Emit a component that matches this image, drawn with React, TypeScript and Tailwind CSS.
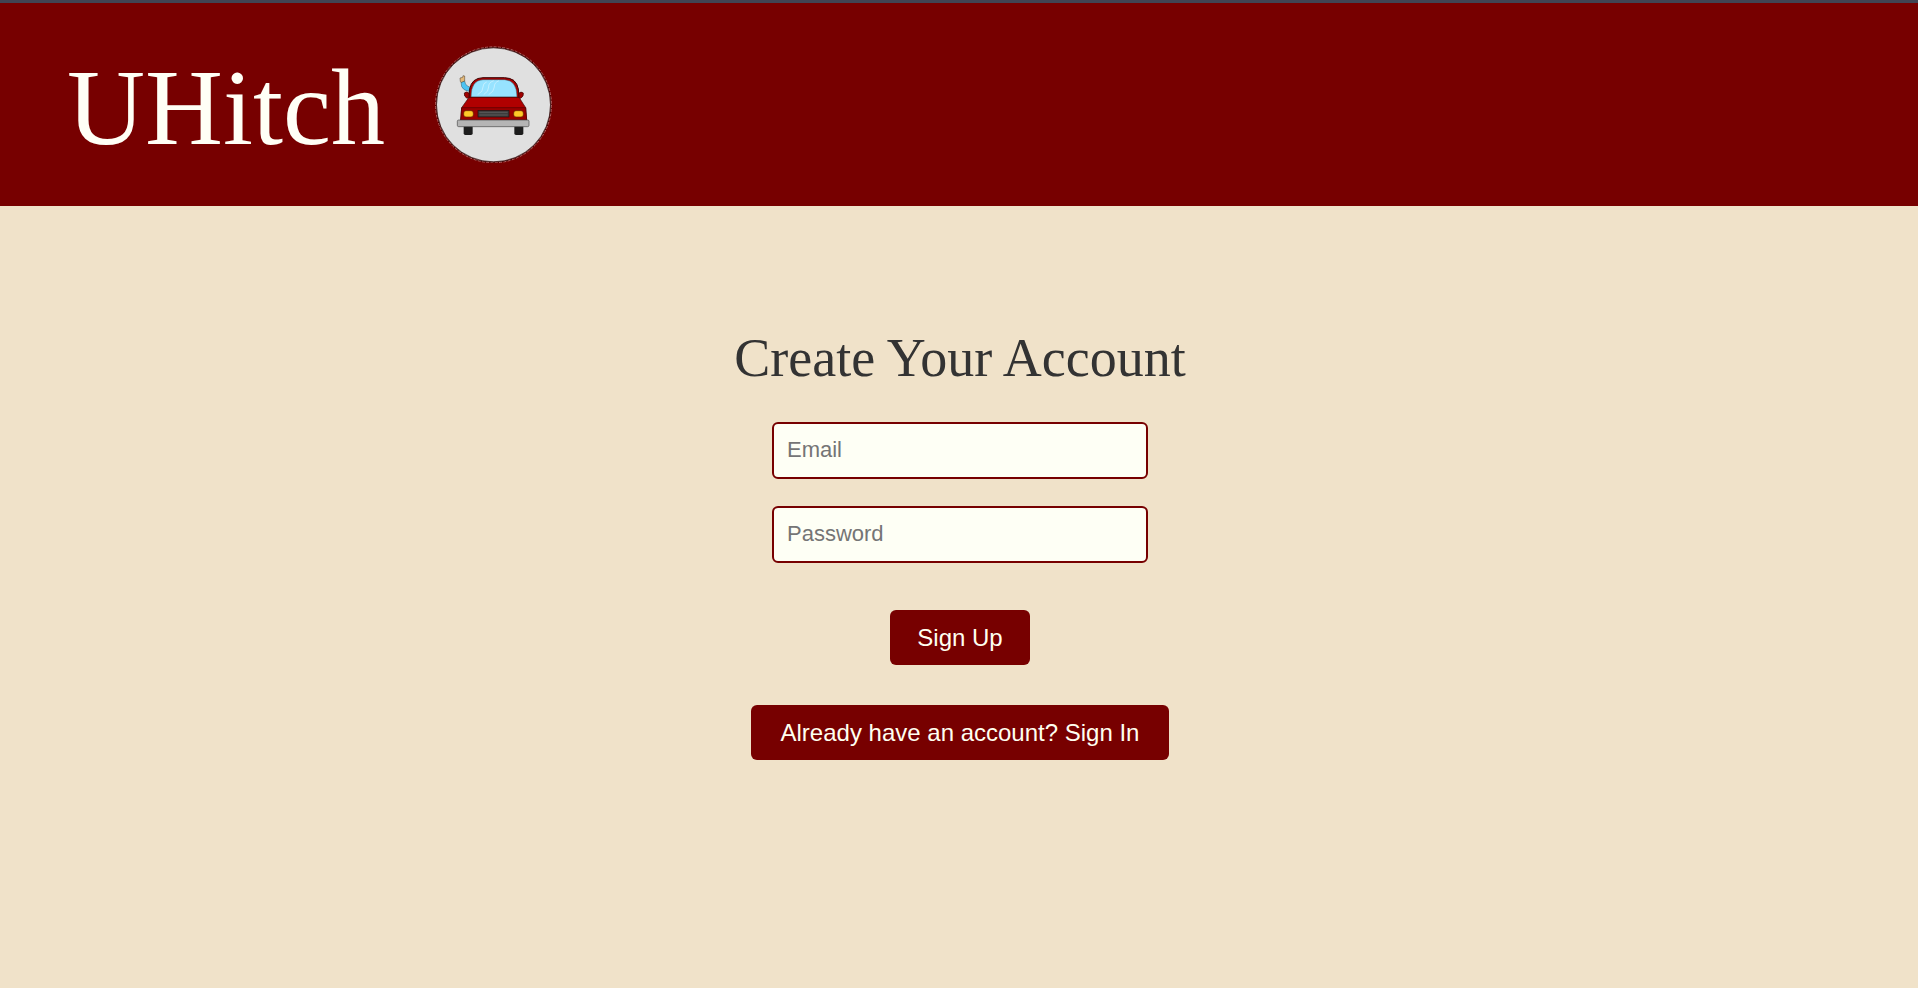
import React, { useState } from 'react';

const SERIF = "font-['Liberation_Serif','Times_New_Roman',serif]";
const SANS = "font-['Liberation_Sans',Arial,sans-serif]";

const inputClass = `w-full h-[57px] px-[13px] pb-0.5 rounded-md border-2 border-[#770000] bg-[#fefff5] text-[22px] text-[#333] placeholder:text-[#757575] outline-none focus:border-[#a00000] ${SANS}`;
const buttonClass = `h-[55px] rounded-md bg-[#770000] text-[24px] text-[#fffff0] cursor-pointer hover:bg-[#900000] ${SANS}`;

function CarLogo() {
  return (
    <svg viewBox="30 33 351 351" className="size-[117px] shrink-0" role="img" aria-label="UHitch logo">
      <circle cx="205.5" cy="209.5" r="174" fill="#3c0000" stroke="#b06060" strokeWidth="3" strokeDasharray="9 4" />
      <circle cx="205.5" cy="209.5" r="171" fill="#e0e0e0" stroke="#2a0000" strokeWidth="2" />

      {/* hitchhiker arm */}
      <path d="M108 141 L119 138 Q120 148 127 153 L136 157 L131 169 Q115 166 110 155 Z" fill="#4dc3f2" stroke="#315a6b" strokeWidth="1.5" />
      <path d="M106 140 L105 129 L113 127 L114 122 L119 123 L119 138 L109 142 Z" fill="#e3b878" stroke="#4a3b28" strokeWidth="1.5" />

      {/* wheels */}
      <rect x="116" y="270" width="27" height="30" rx="5" fill="#1d1d1d" />
      <rect x="268" y="270" width="27" height="30" rx="5" fill="#1d1d1d" />

      {/* mirrors */}
      <path d="M118 174 Q124 168 132 174 L137 186 L126 190 Q116 184 118 174 Z" fill="#a00000" stroke="#3c0505" strokeWidth="2" />
      <path d="M295 174 Q288 168 281 175 L276 187 L287 190 Q297 184 295 174 Z" fill="#a00000" stroke="#3c0505" strokeWidth="2" />

      {/* body and windshield */}
      <path d="M132 189 L134 162 Q140 129 174 128 L239 128 Q274 129 280 162 L282 189 Z" fill="#a80000" stroke="#3c0505" strokeWidth="3" />
      <path d="M138 186 Q138 135 174 134 L239 134 Q276 136 276 186 Z" fill="#97e3ff" stroke="#38454a" strokeWidth="1.5" />
      <g fill="none" stroke="#d8f5ff" strokeWidth="2">
        <path d="M185 141 Q174 144 174 156 Q175 170 158 179" />
        <path d="M206 137 Q190 143 191 156 Q191 170 176 179" />
        <path d="M222 137 Q207 143 208 156 Q207 170 191 179" />
      </g>
      <path d="M132 187 L282 187 L302 218 L305 255 L107 255 L110 218 Z" fill="#b00000" stroke="#3c0505" strokeWidth="2" />
      <path d="M110 218 L302 218 L305 255 L107 255 Z" fill="#9a0000" stroke="#4d0000" strokeWidth="2" />

      {/* headlights */}
      <rect x="116" y="227" width="29" height="19" rx="7" fill="#ffc928" stroke="#5d2500" strokeWidth="2" />
      <rect x="266" y="227" width="29" height="19" rx="7" fill="#ffc928" stroke="#5d2500" strokeWidth="2" />

      {/* grille */}
      <rect x="159" y="226" width="93" height="20" fill="#3c3c3c" stroke="#201010" strokeWidth="2" />
      <path d="M163 232 H248 M163 240 H248" stroke="#686868" strokeWidth="2" />

      {/* bumper */}
      <rect x="97" y="255" width="215" height="20" rx="4" fill="#b5b5b5" stroke="#484848" strokeWidth="2" />
    </svg>
  );
}

export default function App() {
  const [email, setEmail] = useState('');
  const [password, setPassword] = useState('');

  const handleSignUp = (e: React.FormEvent) => {
    e.preventDefault();
  };

  return (
    <div className="min-h-screen bg-[#f0e2c9]">
      <header className="border-t-3 border-[#414554] bg-[#770000]">
        <div className="flex items-center gap-[50px] px-[67px] py-[43px]">
          <h1 className={`pt-[7px] text-[108px] leading-[110px] text-[#fffff6] ${SERIF}`}>UHitch</h1>
          <CarLogo />
        </div>
      </header>

      <main className="flex flex-col items-center pl-[18px] pr-4 pt-[122px] pb-16">
        <h2 className={`text-[54px] leading-[60px] text-[#333] text-center ${SERIF}`}>Create Your Account</h2>

        <form onSubmit={handleSignUp} className="mt-[34px] flex w-full max-w-[376px] flex-col items-center">
          <input
            type="email"
            aria-label="Email"
            placeholder="Email"
            value={email}
            onChange={(e) => setEmail(e.target.value)}
            className={inputClass}
          />
          <input
            type="password"
            aria-label="Password"
            placeholder="Password"
            value={password}
            onChange={(e) => setPassword(e.target.value)}
            className={`mt-[27px] ${inputClass}`}
          />
          <button type="submit" className={`mt-[47px] px-[27px] ${buttonClass}`}>Sign Up</button>
        </form>

        <button type="button" className={`mt-10 px-[30px] ${buttonClass}`}>Already have an account? Sign In</button>
      </main>
    </div>
  );
}
